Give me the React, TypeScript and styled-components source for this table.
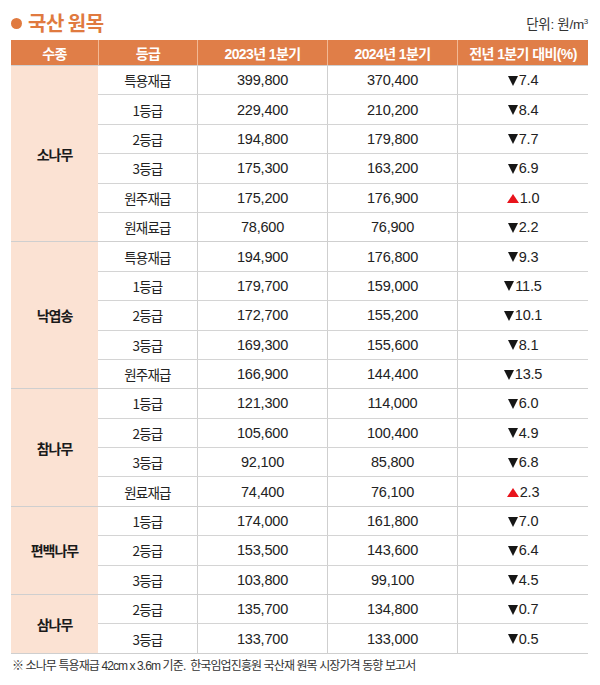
import React from "react";
import styled, { createGlobalStyle } from "styled-components";

const Global = createGlobalStyle`
  html, body { margin: 0; padding: 0; background: #ffffff; }
  body { font-family: "Liberation Sans", "Noto Sans CJK KR", sans-serif; color: #222; }
`;

const Page = styled.div`
  width: 600px;
  padding: 0 12px 0 11px;
  box-sizing: border-box;
`;

const TitleRow = styled.div`
  height: 40px;
  padding-top: 6px;
  box-sizing: border-box;
  display: flex;
  align-items: center;
  justify-content: space-between;
`;

const Title = styled.h1`
  margin: 0;
  font-family: "Noto Sans CJK KR", sans-serif;
  font-size: 20px;
  line-height: 24px;
  font-weight: 700;
  color: #e07a3f;
  letter-spacing: -0.5px;
  display: flex;
  align-items: center;
  gap: 6px;
`;

const Dot = styled.span`
  display: inline-block;
  width: 11px;
  height: 11px;
  border-radius: 50%;
  background: #e07a3f;
`;

const Unit = styled.div`
  font-family: "Liberation Sans", "Noto Sans CJK KR", sans-serif;
  font-size: 13.5px;
  color: #333;
  letter-spacing: -0.3px;
  sup { font-size: 8px; vertical-align: 5px; }
`;

const COLS = "87px 99px 130px 130px 131px";

const Table = styled.div`
  width: 577px;
  border-bottom: 1px solid #cfcfcf;
`;

const HeadRow = styled.div`
  display: grid;
  grid-template-columns: ${COLS};
  height: 25px;
  background: #e07e48;
`;

const HeadCell = styled.div`
  display: flex;
  align-items: center;
  justify-content: center;
  color: #fff;
  font-family: "Liberation Sans", "Noto Sans CJK KR", sans-serif;
  font-size: 14px;
  font-weight: 700;
  letter-spacing: -0.6px;
  border-left: 1px solid #f2b894;
  &:first-child { border-left: none; }
`;

const Group = styled.div`
  display: flex;
  border-top: 1px solid #cfcfcf;
  &:first-of-type { border-top: none; }
`;

const GroupName = styled.div`
  width: 87px;
  flex: none;
  background: #fbe2d3;
  display: flex;
  align-items: center;
  justify-content: center;
  font-family: "Noto Sans CJK KR", sans-serif;
  font-size: 14px;
  font-weight: 700;
  color: #1a1a1a;
  letter-spacing: -1px;
`;

const Rows = styled.div`
  flex: 1;
  display: flex;
  flex-direction: column;
`;

const Row = styled.div`
  display: grid;
  grid-template-columns: 99px 130px 130px 131px;
  height: 29.4px;
  box-sizing: border-box;
  border-top: 1px solid #d4d4d4;
  &:first-child { border-top: none; height: 28.4px; }
`;

const Cell = styled.div<{ $kor?: boolean }>`
  display: flex;
  align-items: center;
  justify-content: center;
  font-family: ${(p) =>
    p.$kor ? `"Noto Sans CJK KR", sans-serif` : `"Liberation Sans", "Noto Sans CJK KR", sans-serif`};
  font-size: ${(p) => (p.$kor ? "13.5px" : "14.5px")};
  letter-spacing: ${(p) => (p.$kor ? "-0.8px" : "-0.2px")};
  color: #222;
  border-left: 1px solid #cfcfcf;
  &:first-child { border-left: none; }
`;

const Tri = styled.span<{ $up?: boolean }>`
  display: inline-block;
  width: 0;
  height: 0;
  margin-right: 1px;
  border-left: ${(p) => (p.$up ? "6px" : "5.5px")} solid transparent;
  border-right: ${(p) => (p.$up ? "6px" : "5.5px")} solid transparent;
  ${(p) =>
    p.$up
      ? "border-bottom: 9px solid #e8141c; margin-top: 1px;"
      : "border-top: 10px solid #161616; margin-top: 1px;"}
`;

const Footer = styled.p`
  margin: 2px 0 0 1px;
  font-family: "Liberation Sans", "Noto Sans CJK KR", sans-serif;
  font-size: 12px;
  color: #333;
  letter-spacing: -0.9px;
  white-space: pre;
`;

type R = [string, string, string, boolean, string];

const data: { name: string; rows: R[] }[] = [
  {
    name: "소나무",
    rows: [
      ["특용재급", "399,800", "370,400", false, "7.4"],
      ["1등급", "229,400", "210,200", false, "8.4"],
      ["2등급", "194,800", "179,800", false, "7.7"],
      ["3등급", "175,300", "163,200", false, "6.9"],
      ["원주재급", "175,200", "176,900", true, "1.0"],
      ["원재료급", "78,600", "76,900", false, "2.2"],
    ],
  },
  {
    name: "낙엽송",
    rows: [
      ["특용재급", "194,900", "176,800", false, "9.3"],
      ["1등급", "179,700", "159,000", false, "11.5"],
      ["2등급", "172,700", "155,200", false, "10.1"],
      ["3등급", "169,300", "155,600", false, "8.1"],
      ["원주재급", "166,900", "144,400", false, "13.5"],
    ],
  },
  {
    name: "참나무",
    rows: [
      ["1등급", "121,300", "114,000", false, "6.0"],
      ["2등급", "105,600", "100,400", false, "4.9"],
      ["3등급", "92,100", "85,800", false, "6.8"],
      ["원료재급", "74,400", "76,100", true, "2.3"],
    ],
  },
  {
    name: "편백나무",
    rows: [
      ["1등급", "174,000", "161,800", false, "7.0"],
      ["2등급", "153,500", "143,600", false, "6.4"],
      ["3등급", "103,800", "99,100", false, "4.5"],
    ],
  },
  {
    name: "삼나무",
    rows: [
      ["2등급", "135,700", "134,800", false, "0.7"],
      ["3등급", "133,700", "133,000", false, "0.5"],
    ],
  },
];

const heads = ["수종", "등급", "2023년 1분기", "2024년 1분기", "전년 1분기 대비(%)"];

export default function App() {
  return (
    <Page>
      <Global />
      <TitleRow>
        <Title>
          <Dot />
          국산 원목
        </Title>
        <Unit>
          단위: 원/m<sup>3</sup>
        </Unit>
      </TitleRow>
      <Table>
        <HeadRow>
          {heads.map((h) => (
            <HeadCell key={h}>{h}</HeadCell>
          ))}
        </HeadRow>
        {data.map((g) => (
          <Group key={g.name}>
            <GroupName>{g.name}</GroupName>
            <Rows>
              {g.rows.map((r, i) => (
                <Row key={i}>
                  <Cell $kor>{r[0]}</Cell>
                  <Cell>{r[1]}</Cell>
                  <Cell>{r[2]}</Cell>
                  <Cell>
                    <Tri $up={r[3]} />
                    {r[4]}
                  </Cell>
                </Row>
              ))}
            </Rows>
          </Group>
        ))}
      </Table>
      <Footer>※ 소나무 특용재급 42cm x 3.6m 기준.  한국임업진흥원 국산재 원목 시장가격 동향 보고서</Footer>
    </Page>
  );
}
